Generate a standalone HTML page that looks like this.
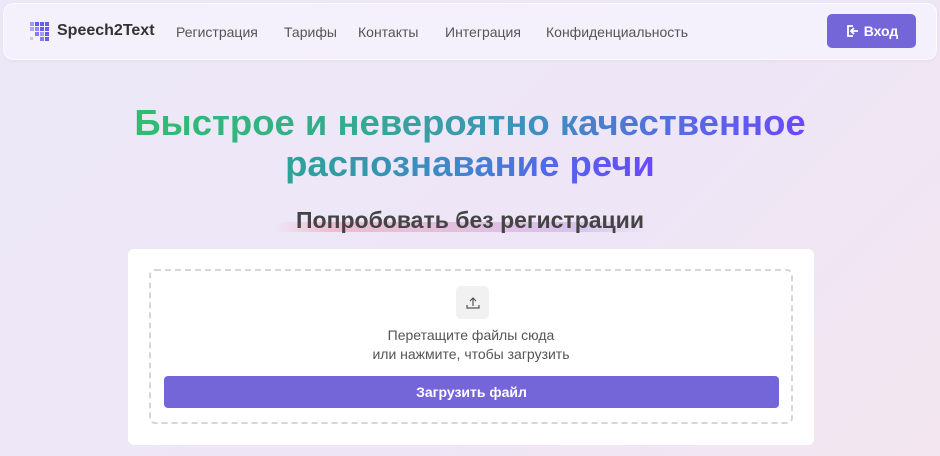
<!DOCTYPE html>
<html><head><meta charset="utf-8"><style>
*{box-sizing:border-box;margin:0;padding:0}
body{width:940px;height:456px;overflow:hidden;font-family:"Liberation Sans",sans-serif;background:linear-gradient(135deg,#ece8f8 0%,#eee6f6 60%,#f3e6f0 100%);position:relative}
.nav{position:absolute;left:3px;top:3px;width:934px;height:57px;background:#f4f1fc;border:1px solid #fbfaff;border-radius:10px;box-shadow:0 1px 3px rgba(0,0,0,.05)}
.logo{position:absolute;left:30px;top:22px;width:19px;height:18px}
.logo i{position:absolute;width:4px;height:4px;background:#6a5ef0}
.brand{position:absolute;left:57px;top:22px;font-size:16px;font-weight:bold;color:#333}
.links{position:absolute;top:24px;font-size:14px;color:#555}
.btn{position:absolute;left:827px;top:14px;width:89px;height:34px;background:#7466d9;border-radius:5px;color:#fff;font-size:14px;font-weight:bold;display:flex;align-items:center;justify-content:center;gap:5px}
h1{position:absolute;left:0;width:940px;text-align:center;font-size:36.5px;font-weight:bold;line-height:41px;top:102px}
h1 span{display:inline-block;color:transparent}
.l1{background-image:linear-gradient(90deg,#2fbe70 0%,#33ad8c 30%,#3f8fc0 60%,#5a64e8 85%,#6a48ff 100%)}
.l2{background-image:linear-gradient(90deg,#2ba596 0%,#3f88c8 45%,#5a5ef0 80%,#6a48ff 100%)}
h1 span.l1,h1 span.l2{-webkit-background-clip:text;background-clip:text;-webkit-text-fill-color:transparent}
.sub{position:absolute;left:0;width:940px;text-align:center;top:207px;font-size:23px;font-weight:bold;color:#444}
.hl{position:absolute;left:275px;top:222px;width:375px;height:10px;background:linear-gradient(90deg,rgba(240,150,170,0),rgba(240,160,180,.6) 15%,rgba(200,170,230,.6) 80%,rgba(160,150,240,0));border-radius:5px}
.card{position:absolute;left:128px;top:249px;width:686px;height:196px;background:#fff;border-radius:6px}
.drop{position:absolute;left:21px;top:20px;width:644px;height:155px;border:2px dashed #d6d6d6;border-radius:6px}
.ic{position:absolute;left:305px;top:15px;width:33px;height:33px;background:#f1f1f1;border-radius:5px;display:flex;align-items:center;justify-content:center}
.t{position:absolute;left:0;width:100%;text-align:center;font-size:14px;color:#555}
.up{position:absolute;left:13px;top:105px;width:615px;height:32px;background:#7466d9;border-radius:4px;color:#fff;font-size:14px;font-weight:bold;display:flex;align-items:center;justify-content:center}
</style></head><body>
<div class="nav"></div>
<div class="logo">
<i style="left:0;top:0;opacity:.6"></i><i style="left:5px;top:0"></i><i style="left:10px;top:0"></i><i style="left:15px;top:0"></i>
<i style="left:0;top:5px;opacity:.5"></i><i style="left:5px;top:5px;opacity:.7"></i><i style="left:10px;top:5px"></i><i style="left:15px;top:5px"></i>
<i style="left:5px;top:10px;opacity:.8"></i><i style="left:10px;top:10px;opacity:.6"></i><i style="left:15px;top:10px"></i>
<i style="left:0;top:15px;opacity:.3;width:3px;height:3px"></i><i style="left:10px;top:15px;opacity:.8"></i><i style="left:15px;top:15px"></i>
</div>
<div class="brand">Speech2Text</div>
<div class="links" style="left:176px">Регистрация</div>
<div class="links" style="left:284px">Тарифы</div>
<div class="links" style="left:358px">Контакты</div>
<div class="links" style="left:445px">Интеграция</div>
<div class="links" style="left:546px">Конфиденциальность</div>
<div class="btn"><svg width="14" height="14" viewBox="0 0 14 14" fill="none" stroke="#fff" stroke-width="1.8"><path d="M8 2H3v10h5M6 7h7M9 4l-3 3 3 3"/></svg>Вход</div>
<h1><span class="l1">Быстрое и невероятно качественное</span><br><span class="l2">распознавание речи</span></h1>
<div class="hl"></div>
<div class="sub">Попробовать без регистрации</div>
<div class="card"><div class="drop">
<div class="ic"><svg width="14" height="14" viewBox="0 0 14 14" fill="none" stroke="#555" stroke-width="1.2"><path d="M7 10V2M4 5l3-3 3 3M1 9v3h12V9"/></svg></div>
<div class="t" style="top:56px">Перетащите файлы сюда</div>
<div class="t" style="top:75px">или нажмите, чтобы загрузить</div>
<div class="up">Загрузить файл</div>
</div></div>
</body></html>
